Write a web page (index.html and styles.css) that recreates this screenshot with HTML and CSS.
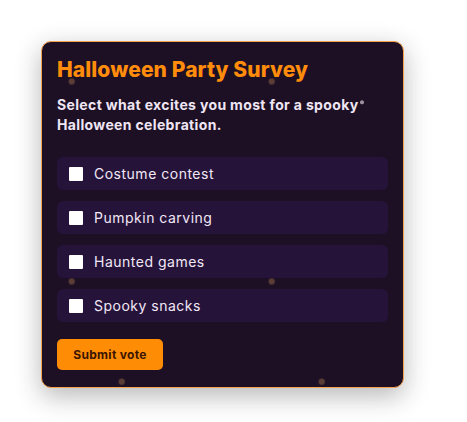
FILE: index.html
```html
<!DOCTYPE html>
<html>
<head>
<meta charset="utf-8">
<link rel="stylesheet" href="styles.css">
</head>
<body>
<form class="card">
  <h1 class="title">Halloween Party Survey</h1>
  <p class="lead">Select what excites you most for a spooky Halloween celebration.</p>
  <div class="options">
    <label class="option"><span class="box"></span><span class="label">Costume contest</span></label>
    <label class="option"><span class="box"></span><span class="label">Pumpkin carving</span></label>
    <label class="option"><span class="box"></span><span class="label">Haunted games</span></label>
    <label class="option"><span class="box"></span><span class="label">Spooky snacks</span></label>
  </div>
  <button type="button" class="submit">Submit vote</button>
</form>
</body>
</html>
```
FILE: styles.css
```css
html, body {
  margin: 0;
  background: #ffffff;
}
body {
  min-height: 422px;
  box-sizing: border-box;
  padding: 41px 0 0 41px;
  font-family: Inter, "Noto Sans", sans-serif;
}
.card {
  box-sizing: border-box;
  width: 363px;
  height: 347px;
  border: 1px solid #f4a24d;
  border-radius: 10px;
  padding: 14px 15px 16px 15px;
  background-color: #1d0f24;
  background-image:
    radial-gradient(circle at 100px 100px, #9b909f 0 1.6px, transparent 2.4px),
    radial-gradient(circle at 100px 100px, #5b3d36 0 2.8px, transparent 3.6px),
    radial-gradient(circle at 100px 100px, #5b3d36 0 2.8px, transparent 3.6px);
  background-size: 200px 200px, 200px 200px, 200px 200px;
  background-repeat: no-repeat, repeat, repeat;
  background-position: 220.3px -39.7px, -70.3px -60.5px, -20.3px 39.7px;
  box-shadow: 0 8px 26px rgba(30, 30, 30, 0.32);
  display: flex;
  flex-direction: column;
  align-items: flex-start;
}
.title {
  margin: 0;
  font-size: 21px;
  line-height: 28px;
  font-weight: 800;
  color: #ff8c0a;
  letter-spacing: 0.1px;
}
.lead {
  margin: 11px 0 0 0;
  font-size: 14px;
  line-height: 20px;
  font-weight: 700;
  color: #efe6f4;
  letter-spacing: 0.35px;
}
.options {
  align-self: stretch;
  display: flex;
  flex-direction: column;
  gap: 11px;
  margin-top: 22px;
}
.option {
  display: flex;
  align-items: center;
  height: 33px;
  padding: 0 12px;
  border-radius: 6px;
  background: #26133a;
}
.box {
  width: 14px;
  height: 14px;
  background: #ffffff;
  border-radius: 1px;
  flex: none;
}
.label {
  margin-left: 11px;
  font-size: 14px;
  color: #f1e8f6;
  letter-spacing: 0.5px;
}
.submit {
  margin-top: 17px;
  width: 106px;
  height: 31px;
  border: none;
  border-radius: 5px;
  background: #ff8c05;
  color: #3a1500;
  font-family: inherit;
  font-size: 12px;
  font-weight: 700;
  letter-spacing: 0.3px;
  padding: 0;
}
```
